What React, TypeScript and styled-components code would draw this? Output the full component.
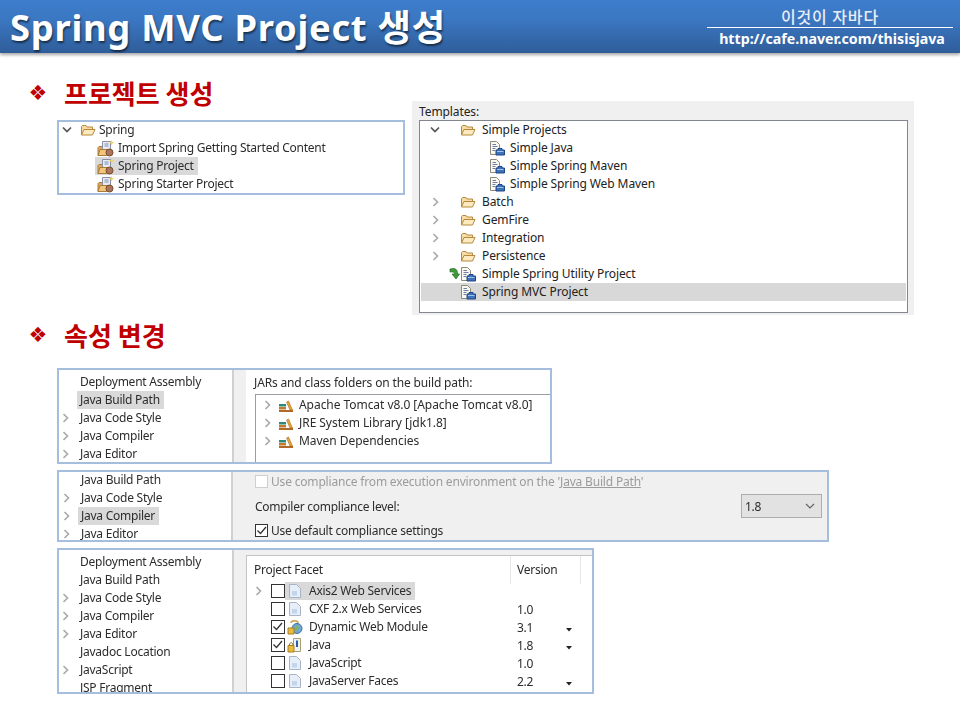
import React from "react";
import styled, { createGlobalStyle } from "styled-components";

const Global = createGlobalStyle`
  html, body { margin: 0; padding: 0; background: #fff; }
  #root { width: 960px; height: 720px; overflow: hidden; }
`;
const FONT = `"Noto Sans", "Noto Sans CJK KR", "Liberation Sans", sans-serif`;

const Slide = styled.div`
  width: 960px; height: 720px; background: #fff; font-family: ${FONT}; overflow: hidden;
`;
const Header = styled.header`
  height: 53px; display: flex; justify-content: space-between;
  background: linear-gradient(#3d7dcb 0%, #3b78c3 35%, #2f5d99 100%);
  box-shadow: 0 2px 3px rgba(0,0,0,.35);
`;
const Title = styled.h1`
  margin: 0 0 0 10px; color: #fff; font: 700 36.4px/55px "Noto Sans", "Noto Sans CJK KR", sans-serif;
  letter-spacing: .7px; text-shadow: 1px 2px 2px rgba(0,0,0,.55); white-space: nowrap;
`;
const Brand = styled.div`
  width: 246px; margin: 7px 7px 0 0; display: flex; flex-direction: column; align-items: center; color: #fff;
`;
const BrandName = styled.div`
  width: 100%; height: 20px; border-bottom: 1px solid #fff; text-align: center;
  font: 500 16px/18px "Noto Sans CJK KR", sans-serif; color: #e9eef6; letter-spacing: .9px;
`;
const BrandUrl = styled.div`
  font: 700 14.2px/20px "Noto Sans", sans-serif; padding-left: 4px; margin-top: 1px;
`;
const TopSection = styled.section`
  display: grid; grid-template-columns: 412px 502px;
`;
const Heading = styled.h2`
  margin: 27px 0 0 28px; height: 26px; display: flex; align-items: center; gap: 16px;
  color: #c00000; font: 700 26px/26px "Noto Sans CJK KR", sans-serif;
`;
const LowerHeading = styled(Heading)`margin-top: 7px;`;
const Diamond = styled.span`
  font: 400 21px/26px "DejaVu Sans", sans-serif; width: 20px; text-align: center;
`;
const Shot = styled.div<{ $w: number; $h: number }>`
  width: ${p => p.$w}px; height: ${p => p.$h}px; box-sizing: border-box;
  border: 2px solid #a6bedd; background: #fff; overflow: hidden; font-size: 12px; color: #2c2c2c;
  display: flex; filter: blur(.3px); letter-spacing: -.25px;
`;
const WizardShot = styled(Shot)`
  margin: 14px 0 0 57px; display: block;
  & > :first-child { margin-top: -1px; }
`;
const TemplatesShot = styled.div`
  margin-top: 48px; height: 214px; box-sizing: border-box; background: #f0f0f0; padding: 3px 6px 2px 7px;
  font-size: 12px; color: #222; letter-spacing: -.1px;
`;
const TemplatesLabel = styled.div`height: 16px; line-height: 16px;`;
const TemplatesBox = styled.div`
  height: 193px; box-sizing: border-box; background: #fff; border: 1px solid #82868e; padding: 0 1px;
`;
const Stack = styled.div`
  margin: 20px 0 0 57px; display: flex; flex-direction: column;
`;
const SecondShot = styled(Shot)`margin-top: 6px; background: #f0f0f0;`;
const ThirdShot = styled(Shot)`margin-top: 6px; background: #f0f0f0;`;
const Nav = styled.nav<{ $x: number; $shift: number }>`
  width: ${p => p.$x}px; box-sizing: border-box; flex: none; background: #fff; border-right: 2px solid #d0d0d0;
  & > :first-child { margin-top: ${p => p.$shift}px; }
`;
const Row = styled.div<{ $sel?: boolean }>`
  height: 18px; display: flex; align-items: center; white-space: nowrap;
  ${p => p.$sel ? "background:#d8d8d8;" : ""}
`;
const Slot = styled.span<{ $w: number }>`
  width: ${p => p.$w}px; flex: none; display: inline-flex; align-items: center; justify-content: flex-end; height: 100%;
`;
const Label = styled.span<{ $gap?: number }>`
  margin-left: ${p => p.$gap ?? 0}px; height: 18px; line-height: 18px; display: inline-block;
`;
const Hi = styled.span<{ $sel?: boolean }>`
  display: inline-flex; align-items: center; height: 18px;
  ${p => p.$sel ? "background:#d9d9d9; padding-right: 4px;" : ""}
`;
const Band = styled.div<{ $w: number }>`width: ${p => p.$w}px; flex: none; background: #f0f0f0;`;
const Pane = styled.div`
  flex: 1; min-width: 0; background: #fff; display: flex; flex-direction: column;
`;
const PaneTitle = styled.div`height: 24px; padding: 3px 0 0 8px; box-sizing: border-box; line-height: 20px; letter-spacing: -.15px;`;
const PaneTree = styled.div`
  flex: 1; margin-left: 9px; border: 1px solid #9a9da3; border-right: 0; border-bottom: 0; padding-top: 1px; letter-spacing: -.05px;
`;
const GreyPane = styled.div`
  flex: 1; display: flex; flex-direction: column; padding: 0 5px 0 22px; min-width: 0;
`;
const CheckLine = styled.label<{ $off?: boolean }>`
  height: 18px; display: flex; align-items: center; gap: 3px; color: ${p => p.$off ? "#9b9b9b" : "#2c2c2c"};
`;
const FadedText = styled.span`letter-spacing: -.18px;`;
const LevelLine = styled.div`
  height: 24px; margin-top: 4px; display: flex; justify-content: space-between; align-items: center;
`;
const Select = styled.div`
  width: 81px; height: 24px; box-sizing: border-box; background: #e2e2e2; border: 1px solid #adadad;
  padding: 0 6px 0 3px; display: flex; justify-content: space-between; align-items: center;
`;
const LastLine = styled(CheckLine)`margin-top: 3px;`;
const Box = styled.span<{ $off?: boolean; $big?: boolean }>`
  width: ${p => p.$big ? 14 : 13}px; height: ${p => p.$big ? 14 : 13}px; box-sizing: border-box; flex: none;
  display: inline-flex; background: #fff; border: 1px solid ${p => p.$off ? "#cfcfcf" : "#333"};
`;
const Link = styled.span`text-decoration: underline;`;
const Facets = styled.div`
  flex: 1; margin-top: 5px; border: 1px solid #c4c4c4; border-right: 0; border-bottom: 0; background: #fff; min-width: 0;
`;
const FacetHead = styled.div`
  height: 26px; display: grid; grid-template-columns: 264px 70px 1fr; line-height: 28px;
`;
const HeadCell = styled.div`
  padding-left: 7px; border-right: 1px solid #e8e8e8;
  & + & { padding-left: 6px; }
`;
const FacetRow = styled.div`
  height: 18px; display: grid; grid-template-columns: 264px 55px 19px; align-items: center; white-space: nowrap;
`;
const FacetName = styled.div`
  display: flex; align-items: center; height: 18px; padding-left: 6px;
`;
const FacetVersion = styled.div`padding-left: 6px;`;

type Kind = "folder" | "wizard" | "tpl" | "lib" | "facet" | "web" | "java";
const Ico = ({ k }: { k: Kind }) => {
  const s = { flex: "none" as const };
  if (k === "folder") return <svg width="16" height="16" viewBox="0 0 16 16" style={s}>
    <path d="M1.5 13V4.5L2.5 3.5H6L7 5H12.5V7" fill="#f6dca4" stroke="#b58a3c" />
    <path d="M1.5 13L4 7.5H15L12.5 13Z" fill="#fbe9c0" stroke="#b58a3c" /></svg>;
  if (k === "wizard") return <svg width="18" height="18" viewBox="0 0 18 18" style={s}>
    <path d="M1 16.5V8.5L2 7.5H6V16.5Z" fill="#e2a95c" stroke="#a97c36" />
    <path d="M5.5 2.5H13.5V13H5.5Z" fill="#e6ebf5" stroke="#8b8fa6" />
    <path d="M7.5 5H11.5M7.5 7H11.5" stroke="#7d8fb5" />
    <path d="M1 16.5L3 10.5H11L9.5 16.5Z" fill="#f2c57e" stroke="#a97c36" />
    <circle cx="12.5" cy="13.5" r="3.5" fill="#a9765a" stroke="#7a4a30" />
    <path d="M14.5 1L15.3 3L17.3 3.8L15.3 4.6L14.5 6.6L13.7 4.6L11.8 3.8L13.7 3Z" fill="#f6d34a" /></svg>;
  if (k === "tpl") return <svg width="16" height="16" viewBox="0 0 16 16" style={s}>
    <path d="M1.5 1.5H7.5L10.5 4.5V14.5H1.5Z" fill="#fbf8ef" stroke="#8d8a78" />
    <path d="M3.5 4.5H7M3.5 6.5H8.5M3.5 8.5H6.5M3.5 10.5H6" stroke="#6f7fa3" />
    <path d="M9 8.5H13V10H15.5V15H7V10H9Z" fill="#3f73b8" stroke="#1f4586" />
    <path d="M8 11.5H14.5" stroke="#9cc0ea" /></svg>;
  if (k === "lib") return <svg width="16" height="16" viewBox="0 0 16 16" style={s}>
    <path d="M1 7H8V9.5H1Z" fill="#2d8a78" />
    <path d="M1 10H8V12.5H1Z" fill="#c47a2c" />
    <path d="M1 13H15V15H1Z" fill="#b06a25" />
    <path d="M8.5 5L10.5 4L14.5 13H12Z" fill="#e8a53c" stroke="#a86c20" strokeWidth=".6" /></svg>;
  if (k === "facet") return <svg width="16" height="16" viewBox="0 0 16 16" style={s}>
    <path d="M2.5 1.5H9.5L13.5 5.5V14.5H2.5Z" fill="#e6eef8" stroke="#a9b5c6" />
    <path d="M5 8H10V12.5H5Z" fill="#c3d5ec" /></svg>;
  if (k === "web") return <svg width="16" height="16" viewBox="0 0 16 16" style={s}>
    <path d="M4 4C4 1 11 1 11 4" fill="none" stroke="#c9a24a" strokeWidth="1.4" />
    <circle cx="10" cy="9.5" r="5" fill="#6fa7d8" stroke="#3d7199" />
    <path d="M8 6L12 8L10 12L7.5 10Z" fill="#7fb55c" />
    <path d="M1 9H7V15H1Z" fill="#e9bc3c" stroke="#a97e1f" /></svg>;
  return <svg width="16" height="16" viewBox="0 0 16 16" style={s}>
    <path d="M6.5 1.5H13.5V14.5H6.5Z" fill="#eef3fa" stroke="#a9a070" />
    <path d="M10 3.5V10" stroke="#2a5ca8" strokeWidth="2" />
    <path d="M2.5 8C2.5 5 6 5 6 8" fill="none" stroke="#8a6a20" />
    <path d="M1 8.5H7V15H1Z" fill="#e9bc3c" stroke="#a97e1f" /></svg>;
};
const Green = () => <svg width="11" height="14" viewBox="0 0 11 14" style={{ flex: "none" }}>
  <path d="M1 2L5 1.5C8 2 8.5 4.5 8.5 7H10.5L7 12L3 7H5.5C5.5 5.5 4.5 4.5 1 5Z" fill="#3f9a3a" stroke="#1f6a22" strokeWidth=".7" /></svg>;
const Open = () => <svg width="10" height="8" viewBox="0 0 10 8" style={{ flex: "none" }}>
  <path d="M1 1.5L5 5.5L9 1.5" fill="none" stroke="#555" strokeWidth="1.7" /></svg>;
const SelectArrow = () => <svg width="10" height="6" viewBox="0 0 10 6" style={{ flex: "none" }}>
  <path d="M1 1L5 5L9 1" fill="none" stroke="#666" strokeWidth="1.2" /></svg>;
const Closed = () => <svg width="8" height="10" viewBox="0 0 8 10" style={{ flex: "none" }}>
  <path d="M1.5 1L5.5 5L1.5 9" fill="none" stroke="#a8a8a8" strokeWidth="1.6" /></svg>;
const Tick = () => <svg width="11" height="11" viewBox="0 0 11 11"><path d="M1.5 5.5L4.5 8.5L10 2" fill="none" stroke="#333" strokeWidth="1.3" /></svg>;
const Caret = () => <svg width="6" height="4" viewBox="0 0 6 4"><path d="M0 0H6L3 3.5Z" fill="#222" /></svg>;

const NavList = ({ items, sel, text, arrow }: { items: [string, boolean][]; sel?: string; text: number; arrow: number }) => (
  <>
    {items.map(([t, a]) => (
      <Row key={t}>
        <Slot $w={arrow}>{a && <Closed />}</Slot>
        <Slot $w={text - arrow - 3} />
        <Hi $sel={sel === t}><Label $gap={3}>{t}</Label></Hi>
      </Row>
    ))}
  </>
);

const TRow = ({ a, k, g, indent, gap, label, sel }: { a?: "o" | "c"; k: Kind; g?: boolean; indent: number; gap: number; label: string; sel?: boolean }) => (
  <Row $sel={sel}>
    <Slot $w={19}>{a === "o" && <Open />}{a === "c" && <Closed />}</Slot>
    <Slot $w={indent - 19}>{g && <Green />}<Ico k={k} /></Slot>
    <Label $gap={gap}>{label}</Label>
  </Row>
);

const Wizard = ({ label, sel }: { label: string; sel?: boolean }) => (
  <Row>
    <Slot $w={36} />
    <Hi $sel={sel}><Slot $w={20}><Ico k="wizard" /></Slot><Label $gap={3}>{label}</Label></Hi>
  </Row>
);

const Facet = ({ a, c, k, name, v, caret, sel }: { a?: boolean; c?: boolean; k: Kind; name: string; v?: string; caret?: boolean; sel?: boolean }) => (
  <FacetRow>
    <FacetName>
      <Slot $w={10}>{a && <Closed />}</Slot>
      <Slot $w={8} />
      <Box $big>{c && <Tick />}</Box>
      <Hi $sel={sel}><Slot $w={18}><Ico k={k} /></Slot><Label $gap={6}>{name}</Label></Hi>
    </FacetName>
    <FacetVersion>{v}</FacetVersion>
    <div>{caret && <Caret />}</div>
  </FacetRow>
);

const Lib = ({ label }: { label: string }) => (
  <Row><Slot $w={16}><Closed /></Slot><Slot $w={22}><Ico k="lib" /></Slot><Label $gap={5}>{label}</Label></Row>
);

export default function App() {
  return (
    <Slide>
      <Global />
      <Header>
        <Title>Spring MVC Project 생성</Title>
        <Brand>
          <BrandName>이것이 자바다</BrandName>
          <BrandUrl>http://cafe.naver.com/thisisjava</BrandUrl>
        </Brand>
      </Header>
      <TopSection>
        <div>
          <Heading><Diamond>❖</Diamond>프로젝트 생성</Heading>
          <WizardShot $w={348} $h={75}>
            <Row><Slot $w={13}><Open /></Slot><Slot $w={24}><Ico k="folder" /></Slot><Label $gap={3}>Spring</Label></Row>
            <Wizard label="Import Spring Getting Started Content" />
            <Wizard label="Spring Project" sel />
            <Wizard label="Spring Starter Project" />
          </WizardShot>
        </div>
        <TemplatesShot>
          <TemplatesLabel>Templates:</TemplatesLabel>
          <TemplatesBox>
            <TRow a="o" k="folder" indent={55} gap={6} label="Simple Projects" />
            <TRow k="tpl" indent={84} gap={5} label="Simple Java" />
            <TRow k="tpl" indent={84} gap={5} label="Simple Spring Maven" />
            <TRow k="tpl" indent={84} gap={5} label="Simple Spring Web Maven" />
            <TRow a="c" k="folder" indent={55} gap={6} label="Batch" />
            <TRow a="c" k="folder" indent={55} gap={6} label="GemFire" />
            <TRow a="c" k="folder" indent={55} gap={6} label="Integration" />
            <TRow a="c" k="folder" indent={55} gap={6} label="Persistence" />
            <TRow g k="tpl" indent={55} gap={6} label="Simple Spring Utility Project" />
            <TRow k="tpl" indent={55} gap={6} label="Spring MVC Project" sel />
          </TemplatesBox>
        </TemplatesShot>
      </TopSection>
      <LowerHeading><Diamond>❖</Diamond>속성 변경</LowerHeading>
      <Stack>
        <Shot $w={495} $h={96}>
          <Nav $x={175} $shift={3}>
            <NavList arrow={11} text={21} sel="Java Build Path" items={[["Deployment Assembly", false], ["Java Build Path", false], ["Java Code Style", true], ["Java Compiler", true], ["Java Editor", true]]} />
          </Nav>
          <Band $w={12} />
          <Pane>
            <PaneTitle>JARs and class folders on the build path:</PaneTitle>
            <PaneTree>
              <Lib label="Apache Tomcat v8.0 [Apache Tomcat v8.0]" />
              <Lib label="JRE System Library [jdk1.8]" />
              <Lib label="Maven Dependencies" />
            </PaneTree>
          </Pane>
        </Shot>
        <SecondShot $w={772} $h={72}>
          <Nav $x={174} $shift={-1}>
            <NavList arrow={12} text={22} sel="Java Compiler" items={[["Java Build Path", false], ["Java Code Style", true], ["Java Compiler", true], ["Java Editor", true]]} />
          </Nav>
          <GreyPane>
            <CheckLine $off><Box $off /><FadedText>Use compliance from execution environment on the '<Link>Java Build Path</Link>'</FadedText></CheckLine>
            <LevelLine><span>Compiler compliance level:</span><Select>1.8<SelectArrow /></Select></LevelLine>
            <LastLine><Box><Tick /></Box><span>Use default compliance settings</span></LastLine>
          </GreyPane>
        </SecondShot>
        <ThirdShot $w={537} $h={146}>
          <Nav $x={175} $shift={3}>
            <NavList arrow={11} text={21} items={[["Deployment Assembly", false], ["Java Build Path", false], ["Java Code Style", true], ["Java Compiler", true], ["Java Editor", true], ["Javadoc Location", false], ["JavaScript", true], ["JSP Fragment", false]]} />
          </Nav>
          <Band $w={12} />
          <Facets>
            <FacetHead><HeadCell>Project Facet</HeadCell><HeadCell>Version</HeadCell></FacetHead>
            <Facet a k="facet" name="Axis2 Web Services" sel />
            <Facet k="facet" name="CXF 2.x Web Services" v="1.0" />
            <Facet c k="web" name="Dynamic Web Module" v="3.1" caret />
            <Facet c k="java" name="Java" v="1.8" caret />
            <Facet k="facet" name="JavaScript" v="1.0" />
            <Facet k="facet" name="JavaServer Faces" v="2.2" caret />
            <Facet k="facet" name="" />
          </Facets>
        </ThirdShot>
      </Stack>
    </Slide>
  );
}
